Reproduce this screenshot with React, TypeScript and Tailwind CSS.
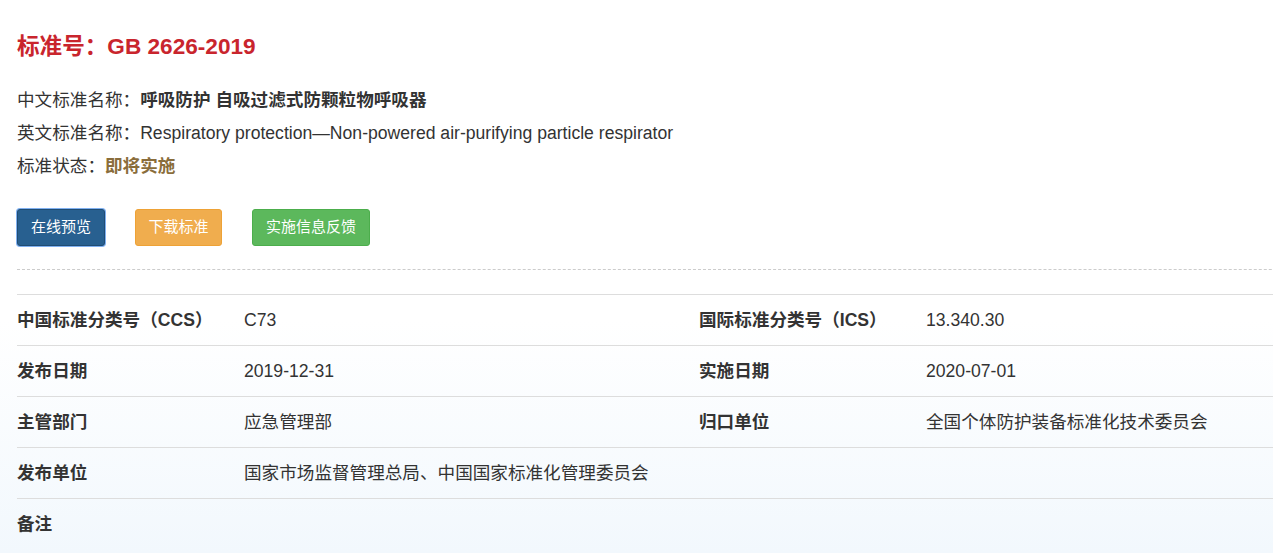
const rows: [string, string, string, string][] = [
  ["中国标准分类号（CCS）", "C73", "国际标准分类号（ICS）", "13.340.30"],
  ["发布日期", "2019-12-31", "实施日期", "2020-07-01"],
  ["主管部门", "应急管理部", "归口单位", "全国个体防护装备标准化技术委员会"],
  ["发布单位", "国家市场监督管理总局、中国国家标准化管理委员会", "", ""],
  ["备注", "", "", ""],
];

export default function App() {
  return (
    <div
      className="min-h-screen w-full overflow-hidden bg-[linear-gradient(to_bottom,#ffffff_58%,#f2f8fd)] text-[#333] font-['Liberation_Sans','Noto_Sans_CJK_SC',sans-serif]"
    >
      <div className="pl-[17px]">
        <h1 className="mt-[32px] text-[22.6px] leading-[30px] font-bold text-[#c9252d]">
          标准号：GB 2626-2019
        </h1>

        <div className="mt-[22px] text-[17.6px] leading-[33px]">
          <div>
            中文标准名称：<span className="font-bold">呼吸防护 自吸过滤式防颗粒物呼吸器</span>
          </div>
          <div>英文标准名称：Respiratory protection—Non-powered air-purifying particle respirator</div>
          <div>
            标准状态：<span className="font-bold text-[#8a6d3b]">即将实施</span>
          </div>
        </div>

        <div className="mt-[26px] flex gap-[30px]">
          <button className="h-[37px] w-[88px] rounded-[3px] border border-[#204d74] bg-[#286090] text-[15px] text-white shadow-[0_0_0_1px_#7fb0f0]">
            在线预览
          </button>
          <button className="h-[37px] w-[87px] rounded-[3px] border border-[#eea236] bg-[#f0ad4e] text-[15px] text-white">
            下载标准
          </button>
          <button className="h-[37px] w-[118px] rounded-[3px] border border-[#4cae4c] bg-[#5cb85c] text-[15px] text-white">
            实施信息反馈
          </button>
        </div>

        <div className="mt-[23px] w-[1400px] border-t border-dashed border-[#cccccc]" />

        <div className="mt-[24px] w-[1364px] text-[17.6px]">
          {rows.map((r, i) => (
            <div key={i} className="flex h-[51px] items-center border-t border-[#dddddd]">
              <div className="w-[227px] font-bold">{r[0]}</div>
              <div className="w-[455px]">{r[1]}</div>
              <div className="w-[227px] font-bold">{r[2]}</div>
              <div className="flex-1">{r[3]}</div>
            </div>
          ))}
        </div>
      </div>
    </div>
  );
}
